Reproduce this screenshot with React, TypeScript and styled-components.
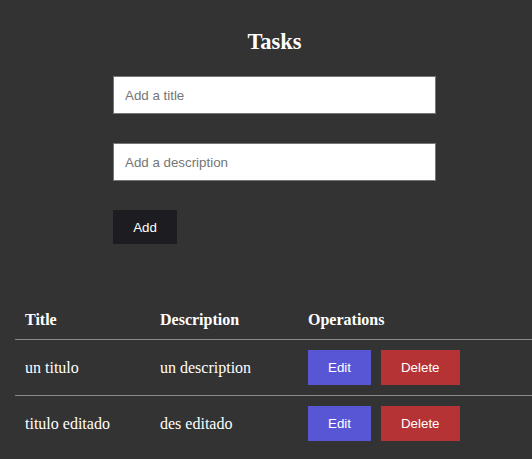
import React from "react";
import styled, { createGlobalStyle } from "styled-components";

const Global = createGlobalStyle`
  html, body { margin: 0; padding: 0; background: #333333; overflow: hidden; }
  body { font-family: "Liberation Serif", "Times New Roman", serif; color: #ffffff; }
  * { box-sizing: border-box; }
`;

const Page = styled.div`
  width: 549px;
  padding-top: 29px;
`;

const Heading = styled.h1`
  margin: 0;
  font-size: 22.5px;
  line-height: 26px;
  font-weight: bold;
  text-align: center;
`;

const Form = styled.form`
  width: 323px;
  margin: 21px auto 0;
  display: flex;
  flex-direction: column;
  align-items: flex-start;
  gap: 29px;
`;

const Input = styled.input`
  width: 100%;
  height: 38px;
  padding: 0 11px;
  border: 1px solid #767676;
  background: #ffffff;
  font-family: "Liberation Sans", Arial, sans-serif;
  font-size: 13.333px;
  color: #222;
  outline: none;
  &::placeholder { color: #757575; }
`;

const Button = styled.button<{ $variant: "dark" | "edit" | "delete" }>`
  height: ${(p) => (p.$variant === "dark" ? "34px" : "35px")};
  width: ${(p) => (p.$variant === "dark" ? "64px" : "auto")};
  padding: ${(p) => (p.$variant === "dark" ? "0" : "0 20px")};
  border: none;
  color: #ffffff;
  font-family: "Liberation Sans", Arial, sans-serif;
  font-size: 13.333px;
  cursor: pointer;
  background: ${(p) =>
    p.$variant === "dark" ? "#1d1d21" : p.$variant === "edit" ? "#5956d6" : "#b53334"};
`;

const Table = styled.table`
  margin: 57px 0 0 15px;
  width: 534px;
  border-collapse: collapse;
  table-layout: fixed;
`;

const Th = styled.th`
  text-align: left;
  padding: 10px;
  font-size: 16px;
  line-height: 18px;
  font-weight: bold;
  border-bottom: 1px solid #8a8a8a;
`;

const Td = styled.td`
  padding: 10px;
  font-size: 16px;
  line-height: 18px;
  vertical-align: middle;
`;

const Row = styled.tr<{ $divided?: boolean }>`
  border-bottom: ${(p) => (p.$divided ? "1px solid #8a8a8a" : "none")};
`;

const Ops = styled.div`
  display: flex;
  gap: 10px;
`;

const tasks = [
  { title: "un titulo", description: "un description" },
  { title: "titulo editado", description: "des editado" },
];

export default function App() {
  return (
    <Page>
      <Global />
      <Heading>Tasks</Heading>
      <Form onSubmit={(e) => e.preventDefault()}>
        <Input placeholder="Add a title" />
        <Input placeholder="Add a description" />
        <Button $variant="dark" type="submit">Add</Button>
      </Form>
      <Table>
        <colgroup>
          <col style={{ width: 135 }} />
          <col style={{ width: 148 }} />
          <col />
        </colgroup>
        <thead>
          <tr>
            <Th>Title</Th>
            <Th>Description</Th>
            <Th>Operations</Th>
          </tr>
        </thead>
        <tbody>
          {tasks.map((t, i) => (
            <Row key={i} $divided={i < tasks.length - 1}>
              <Td>{t.title}</Td>
              <Td>{t.description}</Td>
              <Td>
                <Ops>
                  <Button $variant="edit">Edit</Button>
                  <Button $variant="delete">Delete</Button>
                </Ops>
              </Td>
            </Row>
          ))}
        </tbody>
      </Table>
    </Page>
  );
}
